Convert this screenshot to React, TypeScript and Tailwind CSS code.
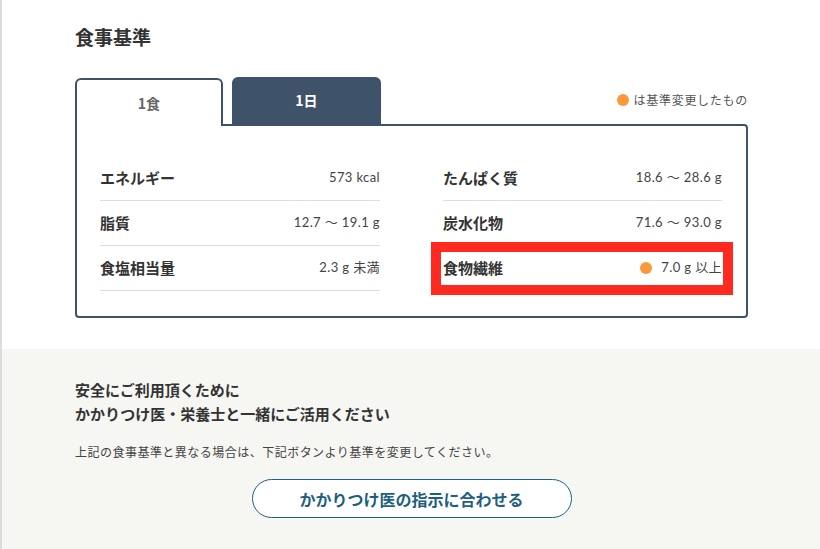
import React from 'react';

type Row = { label: string; value: string; changed?: boolean };

const leftRows: Row[] = [
  { label: 'エネルギー', value: '573 kcal' },
  { label: '脂質', value: '12.7 〜 19.1 g' },
  { label: '食塩相当量', value: '2.3 g 未満' },
];

const rightRows: Row[] = [
  { label: 'たんぱく質', value: '18.6 〜 28.6 g' },
  { label: '炭水化物', value: '71.6 〜 93.0 g' },
  { label: '食物繊維', value: '7.0 g 以上', changed: true },
];

const jp = "font-['Noto_Sans_CJK_JP',sans-serif]";
const num = "font-['Lato','Noto_Sans_CJK_JP',sans-serif]";

const NutrientRow: React.FC<{ row: Row }> = ({ row }) => (
  <div className="h-[45px] flex items-center justify-between border-b border-[#dedede]">
    <span className={`${jp} text-[15px] font-bold text-[#333]`}>{row.label}</span>
    <span className={`${num} text-[13px] tracking-[0.03em] text-[#444] flex items-center gap-[9px]`}>
      {row.changed && <span className="w-3 h-3 rounded-full bg-[#f9993a]" />}
      {row.value}
    </span>
  </div>
);

const App: React.FC = () => {
  return (
    <div className={`${jp} min-h-[549px] w-[820px] border-l-2 border-[#dcdcdc] bg-white flex flex-col`}>
      <section className="pl-[73px] pt-[23px] pb-[31px]">
        <h1 className="text-[19px] font-bold text-[#333] leading-[28px]">食事基準</h1>

        <div className="w-[673px] mt-[26px] relative">
          <div className="flex items-end">
            <div className="w-[148px] h-[48px] border-2 border-b-0 border-[#3e5269] rounded-t-[6px] bg-white flex items-center justify-center text-[14px] font-bold text-[#666] relative z-10 -mb-[2px]">
              1食
            </div>
            <div className="ml-[9px] w-[149px] h-[47px] rounded-t-[6px] bg-[#3e5269] flex items-center justify-center text-[14px] font-bold text-white">
              1日
            </div>
            <div className="ml-auto self-center mt-[-2px] flex items-center gap-[5px] text-[12px] tracking-[0.06em] text-[#555]">
              <span className="w-3 h-3 rounded-full bg-[#f9993a]" />
              は基準変更したもの
            </div>
          </div>

          <div className="border-2 border-[#3e5269] rounded-b-[4px] rounded-tr-[4px] pt-[30px] pb-[25px] pl-[23px] pr-[24px] grid grid-cols-[280px_279px] gap-x-[63px]">
            <div>
              {leftRows.map(r => <NutrientRow key={r.label} row={r} />)}
            </div>
            <div>
              {rightRows.map(r => <NutrientRow key={r.label} row={r} />)}
            </div>
          </div>

          {/* annotation highlight */}
          <div className="absolute left-[356px] top-[165px] w-[302px] h-[53px] border-[10px] border-[#ff2a1f] pointer-events-none" />
        </div>
      </section>

      <section className="flex-1 bg-[#f6f6f2] pl-[73px] pt-[29px] pb-[30px]">
        <h2 className="text-[15px] font-bold text-[#333] leading-[24px]">
          安全にご利用頂くために
          <br />
          かかりつけ医・栄養士と一緒にご活用ください
        </h2>
        <p className="mt-[17px] text-[12px] tracking-[0.04em] text-[#444] leading-[18px]">
          上記の食事基準と異なる場合は、下記ボタンより基準を変更してください。
        </p>
        <div className="w-[673px] mt-[18px] flex justify-center">
          <button className="w-[320px] h-[39px] rounded-full border border-[#1d6183] bg-white text-[16px] font-bold text-[#1d5f7f]">
            かかりつけ医の指示に合わせる
          </button>
        </div>
      </section>
    </div>
  );
};

export default App;
